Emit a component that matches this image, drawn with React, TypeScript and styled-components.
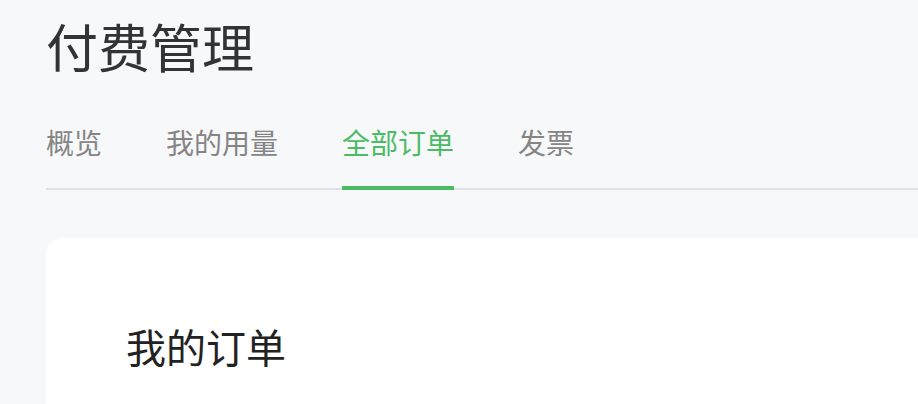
import { createGlobalStyle, styled } from "styled-components";

const GlobalStyle = createGlobalStyle`
  html, body {
    margin: 0;
    padding: 0;
    background-color: #f7f8fa;
    overflow: hidden;
    font-family: "Noto Sans CJK SC", "Noto Sans", sans-serif;
  }
`;

const Page = styled.div`
  padding: 10px 0 0 46px;
  box-sizing: border-box;
`;

const Title = styled.h1`
  margin: 0;
  font-size: 52px;
  line-height: 72px;
  font-weight: 400;
  color: #333333;
`;

const Tabs = styled.div`
  display: flex;
  gap: 64px;
  margin-top: 40px;
  border-bottom: 2px solid #e1e2e6;
`;

const Tab = styled.div<{ $active?: boolean }>`
  font-size: 28px;
  line-height: 40px;
  padding-bottom: 24px;
  margin-bottom: -2px;
  color: ${(p) => (p.$active ? "#4cbb65" : "#858585")};
  border-bottom: 4px solid ${(p) => (p.$active ? "#4cbb65" : "transparent")};
  cursor: pointer;
`;

// the card keeps going past the right and bottom edges of the view
const Card = styled.div`
  margin-top: 48px;
  background-color: #ffffff;
  border-radius: 16px 0 0 0;
  padding: 80px 80px 30px;
`;

const CardTitle = styled.h2`
  margin: 0;
  font-size: 40px;
  line-height: 56px;
  font-weight: 400;
  color: #222222;
`;

const tabs = ["概览", "我的用量", "全部订单", "发票"];

export default function App() {
  return (
    <>
      <GlobalStyle />
      <Page>
        <Title>付费管理</Title>
        <Tabs>
          {tabs.map((t) => (
            <Tab key={t} $active={t === "全部订单"}>
              {t}
            </Tab>
          ))}
        </Tabs>
        <Card>
          <CardTitle>我的订单</CardTitle>
        </Card>
      </Page>
    </>
  );
}
